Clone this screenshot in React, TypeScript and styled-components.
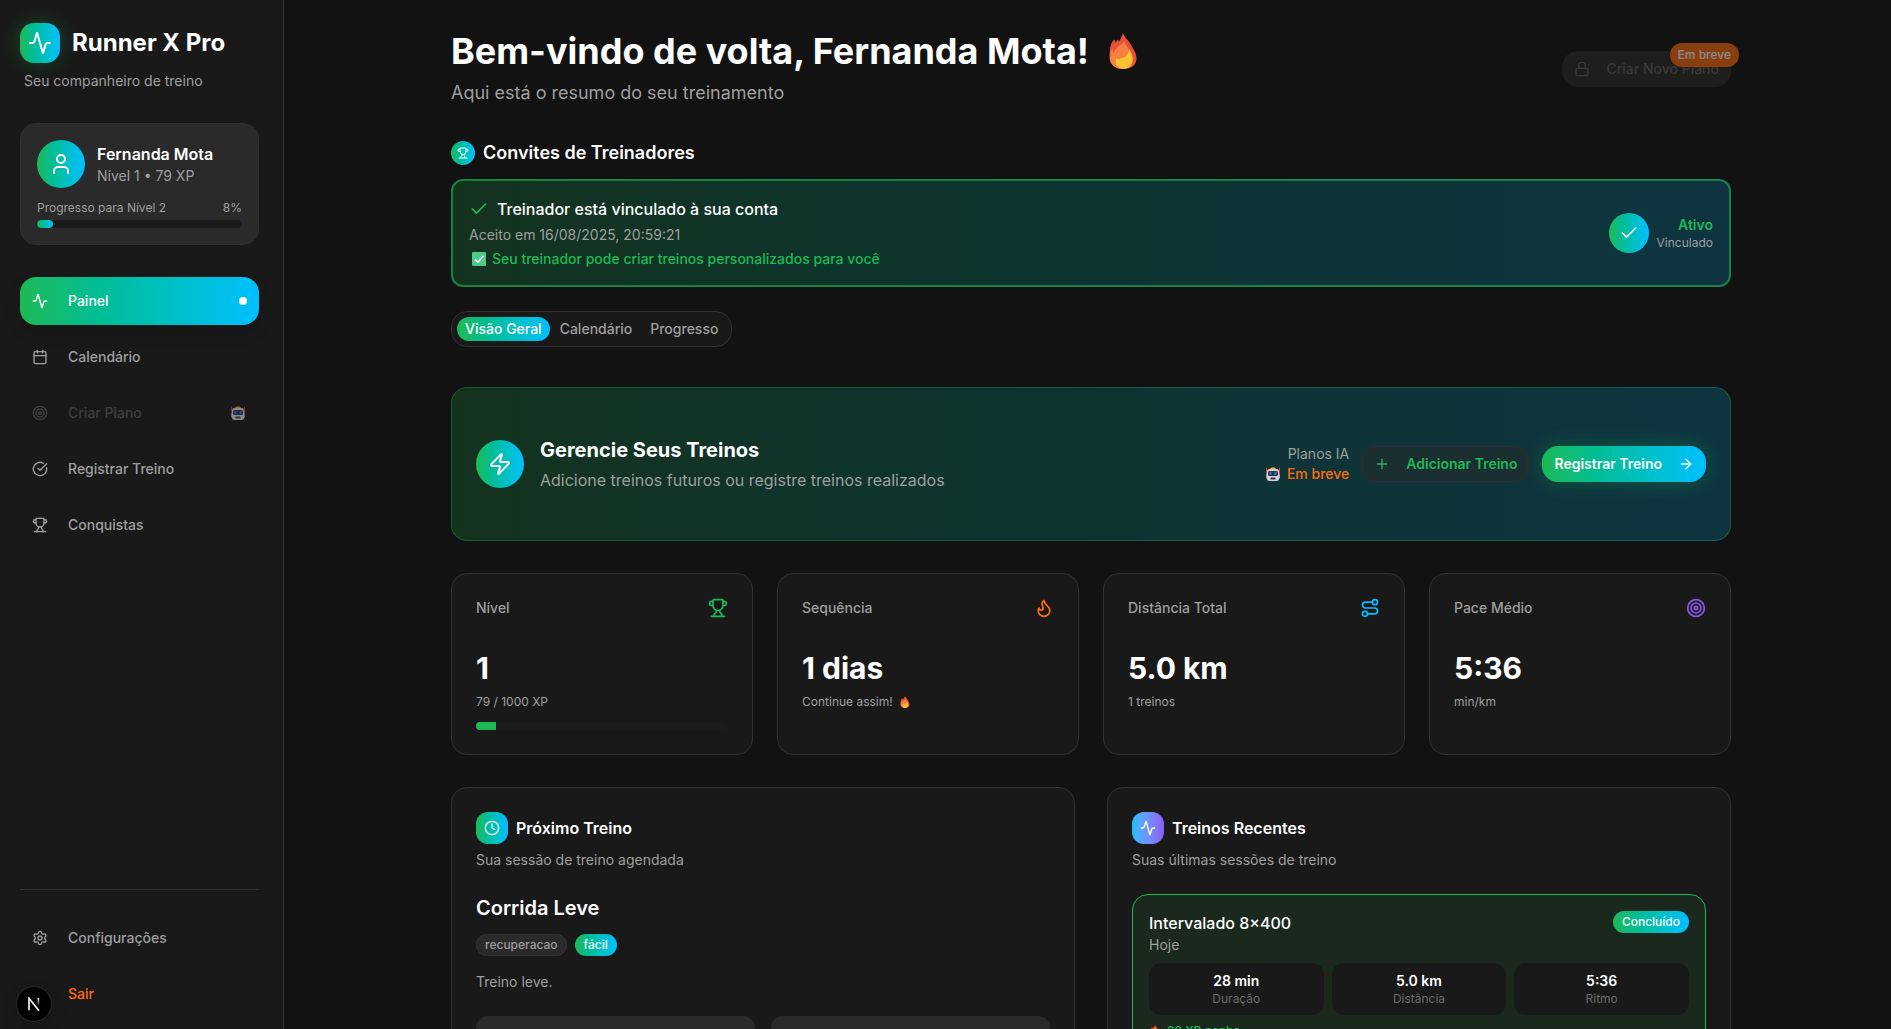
import React from "react";
import styled, { createGlobalStyle, css } from "styled-components";
import {
  Activity,
  ArrowRight,
  Calendar,
  Check,
  CircleCheckBig,
  Clock,
  Flame,
  Lock,
  LogOut,
  Plus,
  Route,
  Settings,
  Target,
  Trophy,
  User,
  Zap,
} from "lucide-react";

const color = {
  page: "#121212",
  surface: "#191919",
  raised: "#2a2a2a",
  line: "#303030",
  text: "#ffffff",
  muted: "#9f9f9f",
  dim: "#6b6b6b",
  green: "#1db954",
  blue: "#00bfff",
  orange: "#ff6b0f",
  purple: "#8b5cf6",
};

const brand = `linear-gradient(to right in oklab, ${color.green}, ${color.blue})`;
const brandSoft =
  "linear-gradient(to right in oklab, rgba(29, 185, 84, 0.2), rgba(0, 191, 255, 0.2))";

const GlobalStyle = createGlobalStyle`
  *, *::before, *::after { box-sizing: border-box; }
  body {
    margin: 0;
    background: ${color.page};
    color: ${color.text};
    font-family: Inter, "Liberation Sans", sans-serif;
    font-size: 14px;
    line-height: 20px;
  }
  h1, h2, h3, p { margin: 0; }
  button { font: inherit; color: inherit; cursor: pointer; }
  svg { flex-shrink: 0; display: block; }
`;

const Shell = styled.div`
  display: flex;
  height: 100vh;
  overflow: hidden;
`;

/* ---------- Sidebar ---------- */

const Sidebar = styled.aside`
  display: flex;
  flex-direction: column;
  flex: 0 0 284px;
  padding: 23px 24px 11px 20px;
  background: ${color.surface};
  border-right: 1px solid ${color.line};
`;

const Brand = styled.div`
  display: flex;
  align-items: center;
  gap: 12px;
  font-size: 24px;
  line-height: 32px;
  font-weight: 700;
`;

const IconTile = styled.span<{ $size: number; $radius: number; $fill?: string; $glow?: boolean }>`
  display: flex;
  align-items: center;
  justify-content: center;
  flex-shrink: 0;
  width: ${(p) => p.$size}px;
  height: ${(p) => p.$size}px;
  border-radius: ${(p) => p.$radius}px;
  background: ${(p) => p.$fill ?? brand};
  color: ${color.text};
  ${(p) =>
    p.$glow &&
    css`
      box-shadow: 0 0 20px rgba(29, 185, 84, 0.3);
    `}
`;

const Tagline = styled.p`
  margin: 8px 0 32px;
  padding-left: 4px;
  color: ${color.muted};
`;

const Profile = styled.section`
  margin-bottom: 32px;
  padding: 16px;
  background: ${color.raised};
  border: 1px solid ${color.line};
  border-radius: 16px;
`;

const ProfileTop = styled.div`
  display: flex;
  align-items: center;
  gap: 12px;
  margin-bottom: 12px;
`;

const ProfileName = styled.p`
  font-size: 16px;
  line-height: 24px;
  font-weight: 600;
`;

const Muted = styled.p`
  color: ${color.muted};
`;

const ProgressLabel = styled.div`
  display: flex;
  justify-content: space-between;
  margin-bottom: 4px;
  font-size: 12px;
  line-height: 16px;
  color: ${color.muted};
`;

const Track = styled.div`
  height: 8px;
  border-radius: 4px;
  overflow: hidden;
  background: #1b1b1b;
`;

const Fill = styled.div<{ $gradient?: boolean }>`
  height: 100%;
  border-radius: ${(p) => (p.$gradient ? 4 : 0)}px;
  background: ${(p) => (p.$gradient ? brand : color.green)};
`;

const Nav = styled.nav`
  display: flex;
  flex-direction: column;
  gap: 8px;
`;

const NavFooter = styled(Nav)`
  margin-top: auto;
  padding-top: 24px;
  border-top: 1px solid ${color.line};
`;

const NavItem = styled.button<{ $active?: boolean; $danger?: boolean }>`
  display: flex;
  align-items: center;
  gap: 20px;
  height: 48px;
  padding: 0 12px;
  border: 0;
  border-radius: 16px;
  background: ${(p) => (p.$active ? brand : "transparent")};
  color: ${(p) => (p.$active ? color.text : p.$danger ? color.orange : color.muted)};
  font-weight: 500;
  text-align: left;
  ${(p) =>
    p.$active &&
    css`
      box-shadow: 0 8px 16px rgba(0, 0, 0, 0.12);
    `}
  &:disabled {
    color: #3e3e3e;
    cursor: not-allowed;
  }
`;

const NavEnd = styled.span`
  display: flex;
  margin-left: auto;
  padding-right: 2px;
`;

const Dot = styled.span`
  width: 8px;
  height: 8px;
  margin-left: auto;
  border-radius: 50%;
  background: ${color.text};
`;

const DevBadge = styled.button`
  position: fixed;
  left: 16px;
  bottom: 7px;
  display: flex;
  align-items: center;
  justify-content: center;
  width: 36px;
  height: 36px;
  padding: 0;
  border: 1px solid #2b2b2b;
  border-radius: 50%;
  background: #000;
  box-shadow: 0 8px 16px rgba(0, 0, 0, 0.15);
`;

/* ---------- Main column ---------- */

const Main = styled.main`
  flex: 1;
  min-width: 0;
  padding: 31px 24px 32px 31px;
  overflow-y: auto;
  scrollbar-width: none;
`;

const Container = styled.div`
  max-width: 1280px;
  margin: 0 auto;
`;

const Header = styled.header`
  display: flex;
  align-items: center;
  justify-content: space-between;
  margin-bottom: 32px;
`;

const Title = styled.h1`
  display: flex;
  align-items: center;
  gap: 16px;
  margin-bottom: 8px;
  font-size: 36px;
  line-height: 40px;
  font-weight: 700;
`;

const Subtitle = styled.p`
  font-size: 18px;
  line-height: 28px;
  color: ${color.muted};
`;

const Button = styled.button<{ $primary?: boolean }>`
  position: relative;
  display: flex;
  align-items: center;
  gap: 16px;
  height: 36px;
  padding: 0 12px;
  border-radius: 16px;
  white-space: nowrap;
  font-weight: 600;
  ${(p) =>
    p.$primary
      ? css`
          border: 0;
          background: ${brand};
          color: ${color.text};
          box-shadow: 0 0 20px rgba(29, 185, 84, 0.3);
        `
      : css`
          border: 1px solid #352b2d;
          background: #1b2f33;
          color: ${color.green};
        `}
  &:disabled {
    border: 0;
    background: ${color.raised};
    color: #606060;
    font-weight: 500;
    opacity: 0.5;
    cursor: not-allowed;
  }
`;

const SoonTag = styled.span`
  position: absolute;
  top: -8px;
  right: -8px;
  padding: 4px 8px;
  border-radius: 12px;
  background: ${color.orange};
  color: ${color.text};
  font-size: 12px;
  line-height: 16px;
  font-weight: 500;
`;

const SectionTitle = styled.h2`
  display: flex;
  align-items: center;
  gap: 8px;
  margin-bottom: 12px;
  font-size: 18px;
  line-height: 28px;
  font-weight: 600;
`;

const Invite = styled.section`
  display: flex;
  align-items: center;
  justify-content: space-between;
  padding: 16px;
  border: 2px solid rgba(29, 185, 84, 0.6);
  border-radius: 12px;
  background: ${brandSoft};
  background-origin: border-box;
`;

const Stack = styled.div<{ $gap?: number; $end?: boolean }>`
  display: flex;
  flex-direction: column;
  gap: ${(p) => p.$gap ?? 0}px;
  text-align: ${(p) => (p.$end ? "right" : "left")};
`;

const Row = styled.div<{ $gap: number }>`
  display: flex;
  align-items: center;
  gap: ${(p) => p.$gap}px;
`;

const InviteTitle = styled.h3`
  display: flex;
  align-items: center;
  gap: 8px;
  font-size: 16px;
  line-height: 24px;
  font-weight: 500;
  svg { color: ${color.green}; }
`;

const InviteNote = styled.p`
  display: flex;
  align-items: center;
  gap: 6px;
  padding-left: 3px;
  color: ${color.green};
  font-weight: 500;
`;

const Status = styled.p`
  color: ${color.green};
  font-weight: 600;
`;

const Small = styled.p`
  display: flex;
  align-items: center;
  gap: 6px;
  font-size: 12px;
  line-height: 16px;
  color: ${color.muted};
`;

const Tabs = styled.div`
  display: flex;
  align-items: center;
  gap: 2px;
  width: fit-content;
  height: 36px;
  margin: 24px 0 40px;
  padding: 0 5px;
  border: 1px solid ${color.line};
  border-radius: 16px;
  background: ${color.surface};
`;

const Tab = styled.button<{ $active?: boolean }>`
  height: 24px;
  padding: 0 8px;
  border: 0;
  border-radius: 12px;
  background: ${(p) => (p.$active ? brand : "transparent")};
  color: ${(p) => (p.$active ? color.text : color.muted)};
  font-weight: 500;
`;

const Banner = styled.section`
  display: flex;
  align-items: center;
  justify-content: space-between;
  margin-bottom: 32px;
  padding: 48px 24px;
  border: 1px solid rgba(29, 185, 84, 0.3);
  border-radius: 16px;
  background: ${brandSoft};
`;

const Heading = styled.h3`
  font-size: 20px;
  line-height: 28px;
  font-weight: 600;
`;

const BannerHeading = styled(Heading)`
  font-weight: 700;
`;

const BannerText = styled.p`
  font-size: 16px;
  line-height: 24px;
  color: ${color.muted};
`;

const Soon = styled.p`
  display: flex;
  align-items: center;
  gap: 7px;
  color: ${color.orange};
  font-weight: 500;
`;

const Stats = styled.div`
  display: grid;
  grid-template-columns: repeat(4, 1fr);
  gap: 24px;
  margin-bottom: 32px;
`;

const Card = styled.section`
  padding: 24px;
  background: ${color.surface};
  border: 1px solid ${color.line};
  border-radius: 16px;
`;

const StatHead = styled.div<{ $tint: string }>`
  display: flex;
  align-items: center;
  justify-content: space-between;
  margin-bottom: 32px;
  color: ${color.muted};
  font-weight: 500;
  svg { color: ${(p) => p.$tint}; }
`;

const StatValue = styled.p`
  margin-bottom: 8px;
  font-size: 30px;
  line-height: 36px;
  font-weight: 700;
`;

const StatTrack = styled(Track)`
  margin-top: 12px;
`;

const Panels = styled.div`
  display: grid;
  grid-template-columns: repeat(2, 1fr);
  gap: 32px;
`;

const PanelTitle = styled.h2`
  display: flex;
  align-items: center;
  gap: 8px;
  font-size: 16px;
  line-height: 24px;
  font-weight: 600;
`;

const PanelText = styled.p`
  margin: 6px 0 24px;
  color: ${color.muted};
`;

const Badges = styled.div`
  display: flex;
  gap: 8px;
  margin: 12px 0 16px;
`;

const Badge = styled.span<{ $brand?: boolean }>`
  display: inline-flex;
  align-items: center;
  height: 22px;
  padding: 0 9px;
  border-radius: 11px;
  font-size: 12px;
  line-height: 16px;
  font-weight: 500;
  color: ${(p) => (p.$brand ? color.text : color.muted)};
  background: ${(p) => (p.$brand ? brand : color.raised)};
  box-shadow: ${(p) => (p.$brand ? "none" : `inset 0 0 0 1px ${color.line}`)};
`;

const Boxes = styled.div`
  display: grid;
  grid-template-columns: repeat(2, 1fr);
  gap: 16px;
  margin-top: 24px;
`;

const Box = styled.div`
  padding: 16px;
  border-radius: 12px;
  background: ${color.raised};
  text-align: center;
`;

const Session = styled.article`
  padding: 16px;
  border: 1px solid ${color.green};
  border-radius: 16px;
  background: #1a281e;
`;

const SessionHead = styled.div`
  display: flex;
  align-items: flex-start;
  justify-content: space-between;
`;

const SessionTitle = styled.h3`
  font-size: 16px;
  line-height: 24px;
  font-weight: 500;
`;

const Metrics = styled.div`
  display: grid;
  grid-template-columns: repeat(3, 1fr);
  gap: 8px;
  margin: 8px 0;
`;

const Metric = styled.div`
  padding: 8px;
  border-radius: 12px;
  background: ${color.surface};
  text-align: center;
`;

const MetricValue = styled.p`
  font-weight: 600;
`;

const MetricLabel = styled.p`
  font-size: 12px;
  line-height: 16px;
  color: ${color.dim};
`;

const Earned = styled(Small)`
  color: ${color.green};
  font-weight: 500;
`;

/* ---------- Pictograms ---------- */

const Fire = ({ size }: { size: number }) => (
  <svg width={size} height={size} viewBox="0 0 36 36" role="img" aria-label="fogo">
    <path
      fill="#e8503a"
      d="M18 0c1 4 5.500 7 8 12 2.800 5 5.500 8 5.500 13.500C31.500 32 26 36 18.500 36 10.500 36 4.500 31.500 4.500 25c0-4 .3-6 .5-9 .3-4 1.800-7 4.200-9.500.8 1 1.300 2 1.600 3.200C12 7.500 12 7 12.800 6.500c.8.5 1 1.500 1.400 2.300C15.500 6 16.800 3 18 0z"
    />
    <path
      fill="#f58142"
      d="M19.500 8c.5 4.500 4.500 7 6.500 11 1.800 3.500 3 8 .5 12-2 3.200-5 5-9 5C10 36 5.200 31 5 25c0-3.500.8-6.500 2.300-9.500.5 1.500.8 3 .7 4.500 1.500-2 2.800-4.500 5-6.500C15.500 11.500 18 11 19.500 8z"
    />
    <path
      fill="#fcc22f"
      d="M24.500 16.500c2 4 4 8.500 2.800 13-1 3.800-4.300 6.200-8.300 6.200-4.500 0-8-2.500-8.300-6.500-.1-1.800.3-3 1-4.200 1 1 2 1.200 3.300.7 2.800-1.200 6-1.500 7.500-4.500.8-1.500 1.500-3 2-4.700z"
    />
  </svg>
);

const Robot = ({ faded }: { faded?: boolean }) => (
  <svg width="14" height="14" viewBox="0 0 28 28" role="img" aria-label="robô" opacity={faded ? 0.6 : 1}>
    <rect x="0" y="1" width="2" height="16" fill="#c9453c" />
    <rect x="26" y="1" width="2" height="16" fill="#c9453c" />
    <path d="M8 5c0-6 12-6 12 0z" fill="#f9a825" />
    <rect x="0" y="14" width="3" height="9" rx="1" fill="#a79db5" />
    <rect x="25" y="14" width="3" height="9" rx="1" fill="#a79db5" />
    <rect x="2" y="4" width="24" height="24" rx="5" fill="#d5d0dc" />
    <rect x="4" y="8" width="20" height="10" rx="3" fill="#2b3550" />
    <rect x="7" y="10" width="4" height="6" rx="2" fill="#2f86cc" />
    <rect x="17" y="10" width="4" height="6" rx="2" fill="#2f86cc" />
    <rect x="9" y="21" width="10" height="4" rx="1" fill="#3c3c44" />
  </svg>
);

const CheckMark = () => (
  <svg width="14" height="14" viewBox="0 0 14 14" aria-hidden="true">
    <rect width="14" height="14" rx="1" fill="#4fc98a" />
    <path d="M3 7.500 6 10.200 11.200 4" fill="none" stroke="#fff" strokeWidth="1.600" />
  </svg>
);

const NextMark = () => (
  <svg width="14" height="14" viewBox="0 0 14 14" aria-hidden="true">
    <defs>
      <linearGradient id="markFade" x1="0" y1="0" x2="0" y2="1">
        <stop offset="0" stopColor="#fff" />
        <stop offset="1" stopColor="#fff" stopOpacity="0" />
      </linearGradient>
    </defs>
    <path d="M2 13.200V1.200L12 13.800" fill="none" stroke="#fff" strokeWidth="1.600" />
    <rect x="10.600" y="1" width="1.600" height="8" fill="url(#markFade)" />
  </svg>
);

/* ---------- Data ---------- */

const metrics = [
  { value: "28 min", label: "Duração" },
  { value: "5.0 km", label: "Distância" },
  { value: "5:36", label: "Ritmo" },
];

const levelProgress = 8;

export default function App() {
  return (
    <>
      <GlobalStyle />
      <Shell>
        <Sidebar>
          <Brand>
            <IconTile $size={40} $radius={14} $glow>
              <Activity size={24} />
            </IconTile>
            Runner X Pro
          </Brand>
          <Tagline>Seu companheiro de treino</Tagline>

          <Profile>
            <ProfileTop>
              <IconTile $size={48} $radius={24}>
                <User size={24} />
              </IconTile>
              <div>
                <ProfileName>Fernanda Mota</ProfileName>
                <Muted>Nível 1 • 79 XP</Muted>
              </div>
            </ProfileTop>
            <ProgressLabel>
              <span>Progresso para Nível 2</span>
              <span>8%</span>
            </ProgressLabel>
            <Track>
              <Fill $gradient style={{ width: `${levelProgress}%` }} />
            </Track>
          </Profile>

          <Nav>
            <NavItem $active>
              <Activity size={16} />
              Painel
              <Dot />
            </NavItem>
            <NavItem>
              <Calendar size={16} />
              Calendário
            </NavItem>
            <NavItem disabled>
              <Target size={16} />
              Criar Plano
              <NavEnd>
                <Robot faded />
              </NavEnd>
            </NavItem>
            <NavItem>
              <CircleCheckBig size={16} />
              Registrar Treino
            </NavItem>
            <NavItem>
              <Trophy size={16} />
              Conquistas
            </NavItem>
          </Nav>

          <NavFooter>
            <NavItem>
              <Settings size={16} />
              Configurações
            </NavItem>
            <NavItem $danger>
              <LogOut size={16} />
              Sair
            </NavItem>
          </NavFooter>
        </Sidebar>

        <Main>
          <Container>
            <Header>
              <div>
                <Title>
                  Bem-vindo de volta, Fernanda Mota!
                  <Fire size={36} />
                </Title>
                <Subtitle>Aqui está o resumo do seu treinamento</Subtitle>
              </div>
              <Button disabled>
                <Lock size={16} />
                Criar Novo Plano
                <SoonTag>Em breve</SoonTag>
              </Button>
            </Header>

            <SectionTitle>
              <IconTile $size={24} $radius={12}>
                <Trophy size={12} />
              </IconTile>
              Convites de Treinadores
            </SectionTitle>
            <Invite>
              <Stack $gap={4}>
                <InviteTitle>
                  <Check size={20} />
                  Treinador está vinculado à sua conta
                </InviteTitle>
                <Muted>Aceito em 16/08/2025, 20:59:21</Muted>
                <InviteNote>
                  <CheckMark />
                  Seu treinador pode criar treinos personalizados para você
                </InviteNote>
              </Stack>
              <Row $gap={8}>
                <IconTile $size={40} $radius={20}>
                  <Check size={20} />
                </IconTile>
                <Stack $end>
                  <Status>Ativo</Status>
                  <Small>Vinculado</Small>
                </Stack>
              </Row>
            </Invite>

            <Tabs role="tablist">
              <Tab role="tab" aria-selected $active>
                Visão Geral
              </Tab>
              <Tab role="tab">Calendário</Tab>
              <Tab role="tab">Progresso</Tab>
            </Tabs>

            <Banner>
              <Row $gap={16}>
                <IconTile $size={48} $radius={24}>
                  <Zap size={24} />
                </IconTile>
                <Stack $gap={4}>
                  <BannerHeading>Gerencie Seus Treinos</BannerHeading>
                  <BannerText>Adicione treinos futuros ou registre treinos realizados</BannerText>
                </Stack>
              </Row>
              <Row $gap={12}>
                <Stack $end>
                  <Muted>Planos IA</Muted>
                  <Soon>
                    <Robot />
                    Em breve
                  </Soon>
                </Stack>
                <Button>
                  <Plus size={16} />
                  Adicionar Treino
                </Button>
                <Button $primary>
                  Registrar Treino
                  <ArrowRight size={16} />
                </Button>
              </Row>
            </Banner>

            <Stats>
              <Card>
                <StatHead $tint={color.green}>
                  Nível
                  <Trophy size={20} />
                </StatHead>
                <StatValue>1</StatValue>
                <Small>79 / 1000 XP</Small>
                <StatTrack>
                  <Fill style={{ width: `${levelProgress}%` }} />
                </StatTrack>
              </Card>
              <Card>
                <StatHead $tint={color.orange}>
                  Sequência
                  <Flame size={20} />
                </StatHead>
                <StatValue>1 dias</StatValue>
                <Small>
                  Continue assim!
                  <Fire size={12} />
                </Small>
              </Card>
              <Card>
                <StatHead $tint={color.blue}>
                  Distância Total
                  <Route size={20} />
                </StatHead>
                <StatValue>5.0 km</StatValue>
                <Small>1 treinos</Small>
              </Card>
              <Card>
                <StatHead $tint={color.purple}>
                  Pace Médio
                  <Target size={20} />
                </StatHead>
                <StatValue>5:36</StatValue>
                <Small>min/km</Small>
              </Card>
            </Stats>

            <Panels>
              <Card>
                <PanelTitle>
                  <IconTile $size={32} $radius={12}>
                    <Clock size={16} />
                  </IconTile>
                  Próximo Treino
                </PanelTitle>
                <PanelText>Sua sessão de treino agendada</PanelText>
                <Heading>Corrida Leve</Heading>
                <Badges>
                  <Badge>recuperacao</Badge>
                  <Badge $brand>fácil</Badge>
                </Badges>
                <Muted>Treino leve.</Muted>
                <Boxes>
                  <Box />
                  <Box />
                </Boxes>
              </Card>

              <Card>
                <PanelTitle>
                  <IconTile
                    $size={32}
                    $radius={12}
                    $fill={`linear-gradient(to right in oklab, ${color.blue}, ${color.purple})`}
                  >
                    <Activity size={16} />
                  </IconTile>
                  Treinos Recentes
                </PanelTitle>
                <PanelText>Suas últimas sessões de treino</PanelText>
                <Session>
                  <SessionHead>
                    <div>
                      <SessionTitle>Intervalado 8×400</SessionTitle>
                      <Muted>Hoje</Muted>
                    </div>
                    <Badge $brand>Concluído</Badge>
                  </SessionHead>
                  <Metrics>
                    {metrics.map((m) => (
                      <Metric key={m.label}>
                        <MetricValue>{m.value}</MetricValue>
                        <MetricLabel>{m.label}</MetricLabel>
                      </Metric>
                    ))}
                  </Metrics>
                  <Earned>
                    <Fire size={12} />
                    28 XP ganho
                  </Earned>
                </Session>
              </Card>
            </Panels>
          </Container>
        </Main>

        <DevBadge aria-label="Next.js">
          <NextMark />
        </DevBadge>
      </Shell>
    </>
  );
}
